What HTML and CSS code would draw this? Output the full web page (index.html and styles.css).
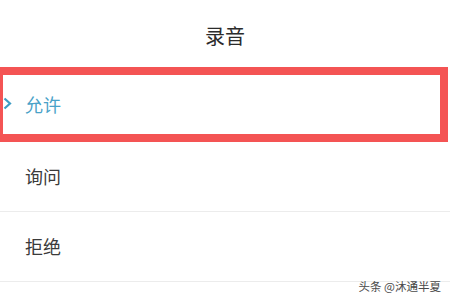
FILE: index.html
```html
<!DOCTYPE html>
<html lang="zh">
<head>
<meta charset="utf-8">
<link rel="stylesheet" href="styles.css">
</head>
<body>
<div class="page">
  <div class="header">录音</div>
  <div class="list">
    <div class="option selected">
      <svg class="chev" width="9" height="13" viewBox="0 0 9 13"><path d="M1.5 1.5 L7 6.5 L1.5 11.5" fill="none" stroke="#3e9dc4" stroke-width="2.2"/></svg>
      <span class="label">允许</span>
    </div>
    <div class="option">询问</div>
    <div class="option">拒绝</div>
  </div>
  <div class="watermark">头条 @沐通半夏</div>
</div>
</body>
</html>
```
FILE: styles.css
```css
html, body {
  margin: 0;
  padding: 0;
  background: #ffffff;
}
.page {
  width: 450px;
  height: 300px;
  overflow: hidden;
  position: relative;
  font-family: "Noto Sans CJK SC", "Noto Sans", sans-serif;
}
.header {
  height: 67px;
  display: flex;
  align-items: center;
  justify-content: center;
  font-size: 20px;
  color: #2b2b2b;
  padding-top: 4px;
  box-sizing: border-box;
}
.list {
  display: flex;
  flex-direction: column;
}
.option {
  height: 67px;
  padding-bottom: 2px;
  display: flex;
  align-items: center;
  padding-left: 25px;
  font-size: 18px;
  color: #3a3a3a;
  border-bottom: 1px solid #ececec;
  box-sizing: content-box;
}
.option.selected {
  height: 57px;
  padding-bottom: 2px;
  border: 8px solid #f45454;
  margin-left: -5px;
  margin-right: 2px;
  padding-left: 0;
  color: #4aa2c8;
}
.chev {
  margin-left: 0;
  margin-right: 13px;
}
.watermark {
  position: absolute;
  right: 9px;
  bottom: 6px;
  font-size: 11.5px;
  color: #4a4a4a;
  text-shadow: 0 0 2px #ffffff;
}
```
